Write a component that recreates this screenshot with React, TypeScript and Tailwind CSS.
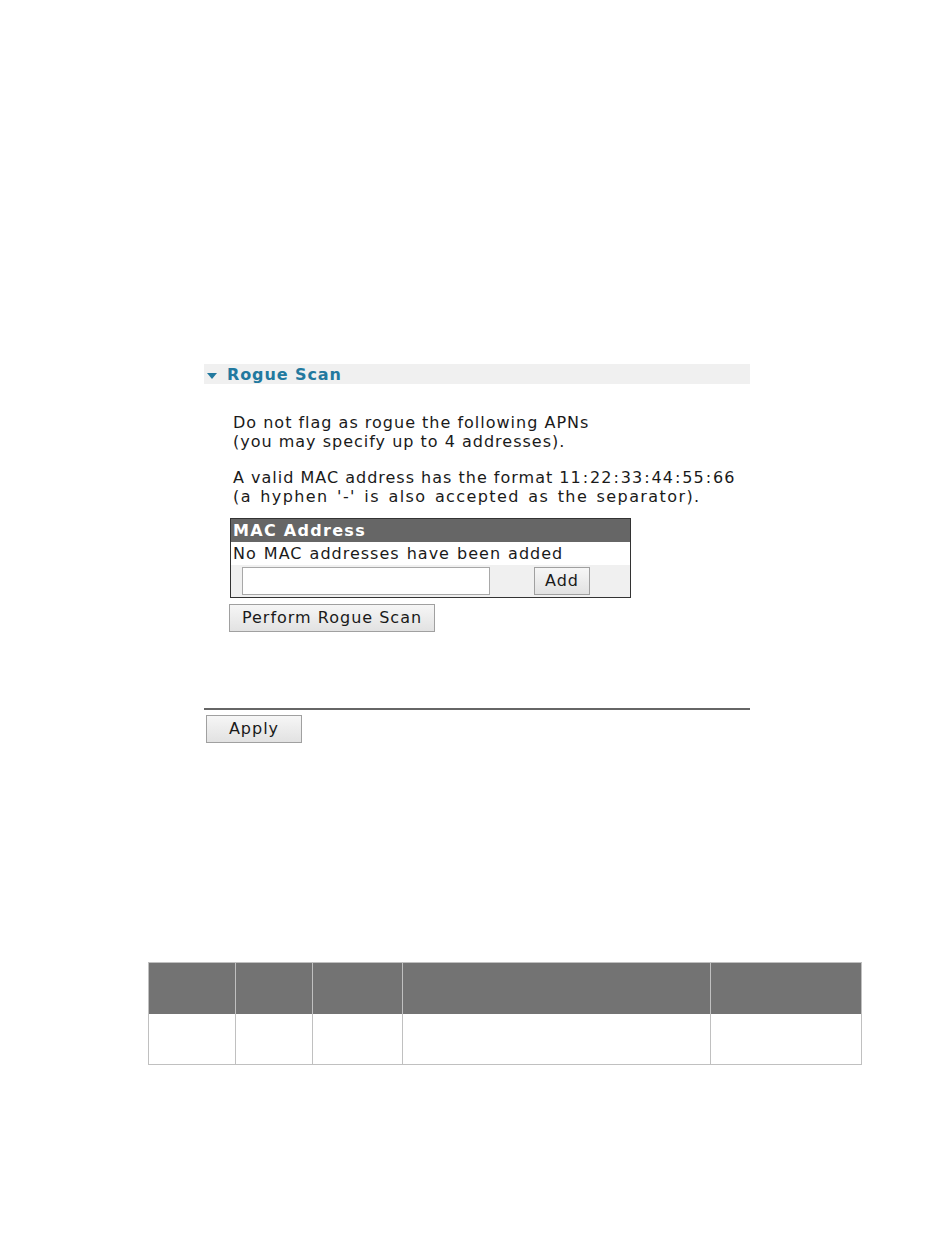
import React from "react";

const font = { fontFamily: '"DejaVu Sans", Verdana, sans-serif' };

function Btn({ children, className }: { children: React.ReactNode; className: string }) {
  return (
    <button
      className={
        "flex items-center justify-center border border-[#a0a0a0] bg-gradient-to-b from-[#f6f6f6] to-[#e2e2e2] text-[16px] tracking-[1px] text-[#1a1a1a] " +
        className
      }
    >
      {children}
    </button>
  );
}

const C = () => <span className="mx-[1px]">:</span>;

export default function App() {
  return (
    <div className="min-h-[1248px] w-[950px] bg-white text-[#1a1a1a]" style={font}>
      <div className="pl-[204px] pt-[364px]">
        <div className="w-[546px]">
          <div className="flex h-[20px] items-center bg-[#f0f0f0]">
            <svg width="10" height="6" viewBox="0 0 10 6" className="ml-[3px] mt-[3px]">
              <path d="M0 0 H10 L5 6 Z" fill="#22799f" />
            </svg>
            <span className="ml-[10px] mt-[2px] text-[16px] font-bold leading-[20px] tracking-[0.9px] text-[#22799f]">Rogue Scan</span>
          </div>
          <div className="pl-[29px] pt-[29px] text-[16px] leading-[19px] tracking-[1px]">
            <p>
              Do not flag as rogue the following APNs
              <br />
              (you may specify up to 4 addresses).
            </p>
            <p className="mt-[17px]">
              A valid MAC address has the format 11<C />22<C />33<C />44<C />55<C />66
              <br />
              <span className="tracking-[1.4px] [word-spacing:2px]">(a hyphen '-' is also accepted as the separator).</span>
            </p>
          </div>
          <div className="ml-[26px] mt-[12px] w-[401px] border border-[#333] tracking-[1px]">
            <div className="h-[23px] bg-[#666] pl-[2px] text-[16px] font-bold leading-[23px] tracking-[1.3px] text-white">MAC Address</div>
            <div className="h-[23px] pl-[2px] text-[16px] leading-[23px] [word-spacing:1px]">No MAC addresses have been added</div>
            <div className="flex h-[32px] items-center bg-[#f0f0f0]">
              <div className="ml-[11px] h-[28px] w-[248px] border border-[#a8a8a8] bg-white" />
              <Btn className="ml-[44px] h-[28px] w-[56px]">Add</Btn>
            </div>
          </div>
          <Btn className="ml-[25px] mt-[6px] h-[28px] w-[206px]">Perform Rogue Scan</Btn>
          <div className="mt-[76px] h-[2px] bg-[#666]" />
          <Btn className="ml-[2px] mt-[5px] h-[28px] w-[96px]">Apply</Btn>
        </div>
      </div>
      <div className="ml-[148px] mt-[219px] w-[714px] border border-[#c0c0c0]">
        <div className="grid h-[51px] grid-cols-[87px_77px_90px_308px_150px] bg-[#737373]">
          <div className="border-r border-[#c0c0c0]" />
          <div className="border-r border-[#c0c0c0]" />
          <div className="border-r border-[#c0c0c0]" />
          <div className="border-r border-[#c0c0c0]" />
          <div />
        </div>
        <div className="grid h-[50px] grid-cols-[87px_77px_90px_308px_150px]">
          <div className="border-r border-[#c0c0c0]" />
          <div className="border-r border-[#c0c0c0]" />
          <div className="border-r border-[#c0c0c0]" />
          <div className="border-r border-[#c0c0c0]" />
          <div />
        </div>
      </div>
    </div>
  );
}
